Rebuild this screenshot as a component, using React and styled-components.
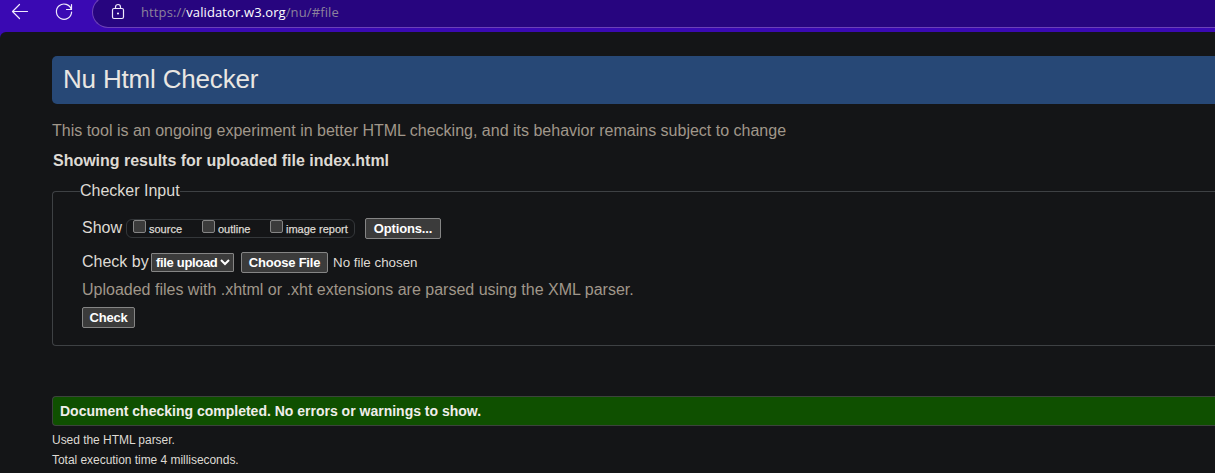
import React from "react";
import styled, { createGlobalStyle } from "styled-components";

const GlobalStyle = createGlobalStyle`
  * { box-sizing: border-box; }
  body {
    margin: 0;
    background: #3a09b3;
    font-family: "Liberation Sans", Arial, sans-serif;
    overflow: hidden;
  }
`;

const Window = styled.div`
  width: 100vw;
  height: 473px;
  overflow: hidden;
  display: flex;
  flex-direction: column;
`;

const Toolbar = styled.header`
  height: 32px;
  flex: none;
  display: flex;
  align-items: flex-end;
  padding: 0 0 4px 8px;
  overflow: hidden;
  background: #3a09b3;
`;

const NavIcon = styled.svg`
  width: 24px;
  height: 24px;
  flex: none;
  margin: 0 ${(p) => p.$gap}px 4px 0;
  fill: none;
  stroke: #efeafc;
  stroke-width: 1.2;
  stroke-linecap: round;
  stroke-linejoin: round;
`;

const AddressBar = styled.div`
  flex: 1;
  height: 32px;
  display: flex;
  align-items: center;
  padding-left: 13px;
  background: #27057f;
  border: 1px solid #6c40b8;
  border-right: 0;
  border-radius: 16px 0 0 16px;
`;

const LockIcon = styled(NavIcon)`
  margin: 0 11px 0 0;
`;

const Url = styled.span`
  font: 13px/18px "Open Sans", "Noto Sans", sans-serif;
  letter-spacing: ${(p) => p.$spacing}px;
  color: #8c829c;
  white-space: nowrap;
`;

const Host = styled.span`
  color: #fff;
`;

const Page = styled.main`
  flex: 1;
  padding: 24px 0 0 52px;
  background: #141517;
  color: #dedad4;
  border-top-left-radius: 6px;
  white-space: nowrap;
`;

const Title = styled.h1`
  margin: 0;
  height: 48px;
  padding-left: 11px;
  border-radius: 5px 0 0 5px;
  background: #274876;
  color: #e9e6e2;
  font-size: 26px;
  font-weight: 400;
  line-height: 46px;
  letter-spacing: -0.18px;
`;

const Note = styled.p`
  margin: ${(p) => p.$top}px 0 0;
  font-size: 16px;
  line-height: 20px;
  color: #a0978a;
`;

const ResultsHeading = styled.h2`
  margin: 10px 0 0;
  padding-left: 1px;
  font-size: 16px;
  line-height: 20px;
  letter-spacing: -0.02px;
`;

const CheckerForm = styled.fieldset`
  margin: 10px 0 0;
  padding: 0 0 0 29px;
  height: 165px;
  border: 1px solid #3e4144;
  border-right: 0;
  border-radius: 4px 0 0 4px;
`;

const Legend = styled.legend`
  margin-left: -2px;
  padding: 0;
  font-size: 16px;
  line-height: 20px;
`;

const Row = styled.div`
  display: flex;
  align-items: center;
  height: 22px;
  margin-top: ${(p) => p.$top}px;
`;

const RowLabel = styled.span`
  width: ${(p) => p.$width}px;
  flex: none;
  font-size: 16px;
  line-height: 20px;
`;

const OptionGroup = styled.div`
  display: flex;
  align-items: flex-start;
  width: 229px;
  height: 19px;
  margin-right: 10px;
  padding-left: 6px;
  border: 1px solid #34373a;
  border-radius: 6px;
`;

const Option = styled.label`
  display: flex;
  width: ${(p) => p.$width}px;
  font-size: 11px;
  line-height: 19px;
  -webkit-text-stroke: 0.25px currentColor;
`;

const Checkbox = styled.input.attrs({ type: "checkbox" })`
  appearance: none;
  flex: none;
  width: 13px;
  height: 13px;
  margin: 0 3px 0 0;
  border: 1px solid #858585;
  border-radius: 2px;
  background: #3b3b3b;
`;

const Button = styled.button`
  width: ${(p) => p.$width}px;
  height: 21px;
  flex: none;
  padding: 0;
  border: 1px solid #858585;
  border-radius: 2px;
  background: #3b3b3b;
  color: #fff;
  font: 700 13px/17px "Liberation Sans", Arial, sans-serif;
  letter-spacing: ${(p) => p.$spacing || 0}px;
`;

const SelectBox = styled(Button)`
  display: flex;
  align-items: center;
  height: 19px;
  padding-left: 4px;
  margin-right: 7px;
  border-radius: 1px;
`;

const Chevron = styled.svg`
  width: 10px;
  height: 8px;
  flex: none;
  margin-left: auto;
  margin-right: 3px;
  fill: none;
  stroke: #fff;
  stroke-width: 2;
`;

const FileName = styled.span`
  margin-left: 5px;
  font-size: 13.33px;
`;

const Success = styled.p`
  margin: 50px 0 0;
  height: 30px;
  padding-left: 7px;
  border: 1px solid #3c433c;
  border-right: 0;
  border-radius: 4px 0 0 4px;
  background: #0f5000;
  color: #f0eeea;
  font-size: 14px;
  font-weight: 700;
  line-height: 28px;
`;

const Detail = styled.p`
  margin: 0;
  font-size: 12px;
  line-height: 20px;
  letter-spacing: -0.04px;
`;

const Details = styled.div`
  padding-top: 4px;
`;

export default function App() {
  return (
    <Window>
      <GlobalStyle />
      <Toolbar>
        <NavIcon $gap={20} viewBox="0 0 24 24">
          <path d="M19.5 11.5H4.5M11.5 4.5l-7 7 7 7" />
        </NavIcon>
        <NavIcon $gap={16} viewBox="0 0 24 24">
          <path d="M19.3 9.5A7.6 7.6 0 1 0 19.6 12M19.5 4.5v5h-5" />
        </NavIcon>
        <AddressBar>
          <LockIcon viewBox="0 0 24 24">
            <rect x="6.5" y="8.5" width="11" height="10" rx="1.5" />
            <path d="M9.5 8.5V7a2.5 2.5 0 0 1 5 0v1.5" />
            <circle cx="12" cy="13.5" r=".5" />
          </LockIcon>
          <Url $spacing={0.11}>
            https://<Host>validator.w3.org</Host>/nu/#file
          </Url>
        </AddressBar>
      </Toolbar>
      <Page>
        <Title>Nu Html Checker</Title>
        <Note $top={17}>
          This tool is an ongoing experiment in better HTML checking, and its behavior remains subject to change
        </Note>
        <ResultsHeading>Showing results for uploaded file index.html</ResultsHeading>
        <CheckerForm>
          <Legend>Checker Input</Legend>
          <Row $top={16}>
            <RowLabel $width={44}>Show</RowLabel>
            <OptionGroup>
              <Option $width={69}><Checkbox />source</Option>
              <Option $width={68}><Checkbox />outline</Option>
              <Option $width={84}><Checkbox />image report</Option>
            </OptionGroup>
            <Button $width={76} $spacing={-0.15}>Options...</Button>
          </Row>
          <Row $top={12}>
            <RowLabel $width={69}>Check by</RowLabel>
            <SelectBox $width={83} $spacing={-0.32}>
              file upload
              <Chevron viewBox="0 0 10 8"><path d="M1 2l4 4 4-4" /></Chevron>
            </SelectBox>
            <Button $width={87} $spacing={-0.2}>Choose File</Button>
            <FileName>No file chosen</FileName>
          </Row>
          <Note $top={7}>Uploaded files with .xhtml or .xht extensions are parsed using the XML parser.</Note>
          <Row $top={6}>
            <Button $width={53} $spacing={-0.25}>Check</Button>
          </Row>
        </CheckerForm>
        <Success>Document checking completed. No errors or warnings to show.</Success>
        <Details>
          <Detail>Used the HTML parser.</Detail>
          <Detail>Total execution time 4 milliseconds.</Detail>
        </Details>
      </Page>
    </Window>
  );
}
